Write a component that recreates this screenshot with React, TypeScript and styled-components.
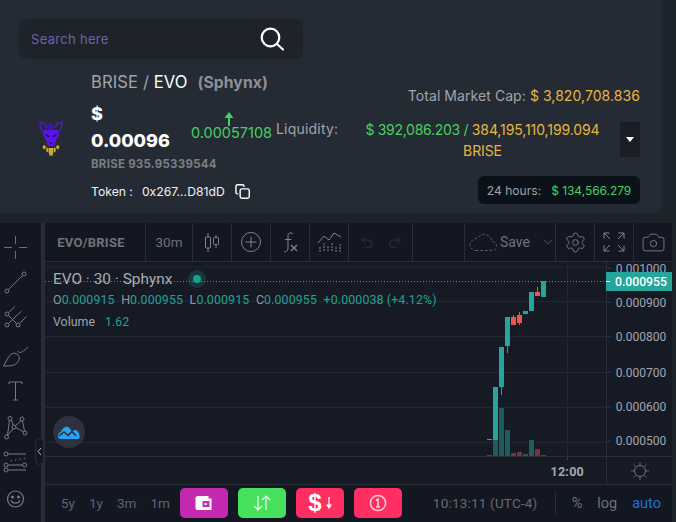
import React from "react";
import styled, { createGlobalStyle } from "styled-components";
import { Settings, Camera, Undo2, Redo2, ChevronDown } from "lucide-react";

const Global = createGlobalStyle`
  html, body { margin: 0; padding: 0; background: #1d232b; }
  body { width: 676px; height: 522px; overflow: hidden; }
  * { box-sizing: border-box; }
`;

const Page = styled.div`
  width: 676px;
  height: 522px;
  display: flex;
  flex-direction: column;
  background: #1d232b;
  font-family: Inter, "Noto Sans", sans-serif;
  overflow: hidden;
`;

const Card = styled.section`
  width: 662px;
  height: 213px;
  flex: none;
  padding: 19px 22px 0 19px;
  background: #252b34;
  border-radius: 0 0 7px 0;
`;

const SearchBox = styled.div`
  width: 284px;
  height: 40px;
  display: flex;
  align-items: center;
  justify-content: space-between;
  padding: 0 19px 0 12px;
  background: #1e232b;
  border-radius: 7px;
`;

const SearchText = styled.span`
  font-size: 13px;
  letter-spacing: 0.3px;
  color: #6b63a8;
`;

const InfoRow = styled.div`
  display: flex;
  height: 154px;
`;

const LeftBlock = styled.div`
  width: 257px;
  flex: none;
  display: flex;
`;

const LogoCol = styled.div`
  width: 72px;
  flex: none;
  padding: 62px 0 0 20px;
`;

const Details = styled.div`
  flex: 1;
  display: flex;
  flex-direction: column;
  white-space: nowrap;
`;

const Title = styled.div`
  height: 24px;
  margin-top: 11px;
  font-size: 16.6px;
  line-height: 24px;
  letter-spacing: 0.1px;
  color: #a0a4ab;
`;

const White = styled.span`
  color: #ffffff;
`;

const Pair = styled.b`
  margin-left: 5px;
  font-size: 15.7px;
  font-weight: 700;
  color: #8d9095;
`;

const PriceRow = styled.div`
  display: flex;
  height: 54px;
  margin-top: 6px;
`;

const Price = styled.div`
  width: 101px;
  flex: none;
  font-size: 18px;
  line-height: 27px;
  font-weight: 800;
  color: #ffffff;
`;

const Change = styled.div`
  display: flex;
  flex-direction: column;
  align-items: center;
  width: 79px;
  padding-top: 12px;
  font-size: 14.5px;
  line-height: 18px;
  color: #46d160;
`;

const ChangeArrow = styled.svg`
  flex: none;
  margin: 0 6px -2px 0;
`;

const BriseValue = styled.div`
  margin-top: 2px;
  font-size: 11.5px;
  line-height: 16px;
  font-weight: 700;
  letter-spacing: 0.25px;
  color: #7b7e83;
`;

const TokenRow = styled.div`
  display: flex;
  align-items: center;
  margin-top: 11px;
  height: 16px;
  font-size: 12.2px;
  color: #f1f2f3;
`;

const TokenAddress = styled.span`
  margin: 0 10px 0 9px;
`;

const RightBlock = styled.div`
  flex: 1;
  display: flex;
  flex-direction: column;
  align-items: flex-end;
  padding-top: 28px;
`;

const CapLine = styled.div`
  height: 18px;
  font-size: 14px;
  line-height: 18px;
  letter-spacing: 0.07px;
  color: #a0a4ab;
  white-space: nowrap;
`;

const Gold = styled.span`
  color: #e8b53e;
`;

const Green = styled.span`
  color: #46d160;
`;

const LiquidGreen = styled(Green)`
  letter-spacing: -0.3px;
`;

const LiquidGold = styled(Gold)`
  letter-spacing: -0.1px;
`;

const LiquidityRow = styled.div`
  align-self: stretch;
  display: flex;
  align-items: flex-start;
  margin-top: 17px;
`;

const LiquidityLabel = styled.span`
  width: 89px;
  flex: none;
  margin-top: -2px;
  font-size: 14px;
  line-height: 18px;
  letter-spacing: 0.2px;
  color: #a0a4ab;
`;

const LiquidityValue = styled.div`
  width: 235px;
  flex: none;
  margin-top: -3px;
  text-align: center;
  font-size: 14px;
  line-height: 21px;
  white-space: nowrap;
`;

const CaretButton = styled.div`
  width: 20px;
  height: 35px;
  flex: none;
  margin-left: auto;
  display: flex;
  align-items: center;
  justify-content: center;
  background: #1a1e26;
`;

const VolumePill = styled.div`
  width: 162px;
  height: 28px;
  margin-top: 15px;
  display: flex;
  align-items: center;
  justify-content: center;
  gap: 10px;
  font-size: 12px;
  letter-spacing: 0.05px;
  color: #a0a4ab;
  background: #0b1118;
  border-radius: 6px;
  white-space: nowrap;
`;

const PillGreen = styled(Green)`
  letter-spacing: -0.05px;
`;

const Widget = styled.section`
  position: relative;
  width: 672px;
  height: 299px;
  margin-top: 10px;
  flex: none;
  display: flex;
  background: #131722;
  font-family: Roboto, "Liberation Sans", sans-serif;
`;

const DrawingBar = styled.div`
  width: 45px;
  flex: none;
  padding-top: 6px;
  display: flex;
  flex-direction: column;
  border-right: 4px solid #282c37;
`;

const DrawingTool = styled.div<{ $active?: boolean }>`
  width: 30px;
  height: 36px;
  display: flex;
  align-items: center;
  justify-content: center;
  color: ${(p) => (p.$active ? "#2a7fdc" : "#777a84")};
`;

const Collapse = styled.div`
  position: absolute;
  left: 35px;
  top: 215px;
  width: 9px;
  height: 27px;
  display: flex;
  align-items: center;
  justify-content: center;
  background: #131722;
  border: 1px solid #2a2e39;
  border-radius: 5px;
`;

const Main = styled.div`
  flex: 1;
  min-width: 0;
  display: flex;
  flex-direction: column;
`;

const TopBar = styled.div`
  height: 39px;
  flex: none;
  display: flex;
  border-bottom: 1px solid #2a2e39;
`;

const TopItem = styled.div<{ $w: number; $noLine?: boolean; $shift?: number }>`
  width: ${(p) => p.$w}px;
  flex: none;
  display: flex;
  align-items: center;
  justify-content: center;
  padding-left: ${(p) => (p.$shift && p.$shift > 0 ? p.$shift : 0)}px;
  padding-right: ${(p) => (p.$shift && p.$shift < 0 ? -p.$shift : 0)}px;
  color: #80838d;
  font-size: 13px;
  border-right: ${(p) => (p.$noLine ? "none" : "1px solid #2a2e39")};
`;

const Symbol = styled.b`
  font-size: 13px;
  font-weight: 700;
  letter-spacing: 0.25px;
  color: #6f7379;
`;

const Interval = styled.span`
  font-size: 13.5px;
  color: #6f727b;
`;

const SaveLabel = styled.span`
  margin: 0 11px 0 2px;
  font-size: 14px;
  color: #6f727b;
`;

const ChartGrid = styled.div`
  position: relative;
  display: grid;
  grid-template-columns: 561px 66px;
  grid-template-rows: 194px 28px;
  background: #161a25;
  border-bottom: 1px solid #2a2e39;
`;

const Legend = styled.div`
  position: absolute;
  left: 8px;
  top: 7px;
  color: #b2b5be;
  white-space: nowrap;
`;

const LegendTitle = styled.div`
  height: 20px;
  display: flex;
  align-items: center;
  gap: 6px;
  font-size: 15.4px;
  color: #a9acb5;
`;

const Dot = styled.i`
  width: 18px;
  height: 18px;
  margin-left: 10px;
  display: flex;
  align-items: center;
  justify-content: center;
  border-radius: 50%;
  background: rgba(38, 166, 154, 0.2);
  &::after {
    content: "";
    width: 8px;
    height: 8px;
    border-radius: 50%;
    background: #0fa58f;
  }
`;

const Ohlc = styled.div`
  height: 20px;
  display: flex;
  gap: 6.5px;
  align-items: center;
  font-size: 12.4px;
  letter-spacing: 0.12px;
  color: #9598a1;
`;

const Teal = styled.span`
  color: #1fa294;
`;

const VolumeLine = styled.div`
  margin-top: 2px;
  height: 20px;
  display: flex;
  gap: 10px;
  align-items: center;
  font-size: 12.4px;
  color: #a0a3ac;
`;

const LogoBadge = styled.div`
  position: absolute;
  left: 8px;
  top: 154px;
  width: 32px;
  height: 32px;
  display: flex;
  align-items: center;
  justify-content: center;
  border-radius: 50%;
  background: #2e323e;
`;

const PriceTag = styled.div`
  position: absolute;
  left: 561px;
  top: 10px;
  width: 66px;
  height: 19px;
  display: flex;
  align-items: center;
  padding-left: 9px;
  font-size: 12.2px;
  font-weight: 500;
  color: #ffffff;
  background: #26a69a;
  &::before {
    content: "";
    position: absolute;
    left: 0;
    top: 9px;
    width: 4px;
    height: 1px;
    background: #ffffff;
  }
`;

const TimeAxis = styled.div`
  position: relative;
  border-top: 1px solid #2a2e39;
  display: flex;
  align-items: center;
  justify-content: flex-end;
  padding: 2px 22px 0 0;
  font-size: 12.5px;
  font-weight: 700;
  letter-spacing: 0.25px;
  color: #a5a8b0;
  &::after {
    content: "";
    position: absolute;
    left: 522px;
    top: 0;
    width: 1px;
    height: 3px;
    background: #363a45;
  }
`;

const AxisCorner = styled.div`
  display: flex;
  align-items: center;
  justify-content: center;
  color: #70737d;
  border-top: 1px solid #2a2e39;
  border-left: 1px solid #2a2e39;
`;

const BottomBar = styled.div`
  flex: 1;
  display: flex;
  align-items: center;
  padding: 0 11px 1px 16px;
  font-size: 13.5px;
  color: #5a6478;
  white-space: nowrap;
`;

const Ranges = styled.div`
  display: flex;
  gap: 14px;
  margin-right: 10px;
`;

const Actions = styled.div`
  display: flex;
  gap: 10px;
`;

const ActionButton = styled.div<{ $bg: string }>`
  width: 48px;
  height: 30px;
  display: flex;
  align-items: center;
  justify-content: center;
  gap: 4px;
  color: #ffffff;
  background: ${(p) => p.$bg};
  border-radius: 5px;
`;

const Dollar = styled.b`
  font-family: "Liberation Sans", sans-serif;
  font-size: 24px;
  line-height: 24px;
  font-weight: 700;
`;

const Clock = styled.span`
  margin: 0 17px 0 31px;
  font-size: 13.5px;
  letter-spacing: 0.2px;
  color: #666a75;
`;

const BarDivider = styled.span`
  width: 1px;
  height: 22px;
  margin-right: 17px;
  background: #2a2e39;
`;

const ScaleMode = styled.span<{ $active?: boolean }>`
  margin-right: 15px;
  font-size: 14.5px;
  color: ${(p) => (p.$active ? "#1f6fd6" : "#6f727c")};
  &:last-child {
    margin-right: 0;
  }
`;

type Candle = { x: number; top: number; bot: number; hi?: number; lo?: number; up: boolean; vol: number };

const candles: Candle[] = [
  { x: 487, top: 439, bot: 440, up: true, vol: 455 },
  { x: 493, top: 387, bot: 440, up: true, vol: 440 },
  { x: 499, top: 347, bot: 387, lo: 395, up: true, vol: 408 },
  { x: 505, top: 317, bot: 346, lo: 353, up: true, vol: 430 },
  { x: 511, top: 317, bot: 325, hi: 315, up: false, vol: 453 },
  { x: 517, top: 315, bot: 323, hi: 312, lo: 325, up: false, vol: 452 },
  { x: 523, top: 311, bot: 314, up: true, vol: 454 },
  { x: 529, top: 292, bot: 311, up: true, vol: 440 },
  { x: 535, top: 292, bot: 296, hi: 287, up: false, vol: 449 },
  { x: 541, top: 281, bot: 297, up: true, vol: 455 },
];

const grid = [267, 301.5, 336.5, 372.5, 407.5, 442.5];
const prices = ["0.001000", "0.000900", "0.000800", "0.000700", "0.000600", "0.000500"];

function ChartPane() {
  const ox = 45;
  const oy = 262;
  return (
    <svg width="561" height="194" viewBox={`${ox} ${oy} 561 194`} style={{ display: "block" }}>
      {grid.map((y) => (
        <line key={y} x1={ox} x2={606} y1={y} y2={y} stroke="#232732" />
      ))}
      <line x1="567.5" x2="567.5" y1={oy} y2="456" stroke="#232732" />
      {candles.map((c) => (
        <rect
          key={`v${c.x}`}
          x={c.x}
          y={c.vol}
          width="5"
          height={456 - c.vol}
          fill={c.up ? "#1d5d5c" : "#7c3338"}
        />
      ))}
      {candles.map((c) => {
        const col = c.up ? "#26a69a" : "#ef5350";
        return (
          <g key={c.x}>
            {c.hi !== undefined && <line x1={c.x + 2.5} x2={c.x + 2.5} y1={c.hi} y2={c.top} stroke={col} />}
            {c.lo !== undefined && <line x1={c.x + 2.5} x2={c.x + 2.5} y1={c.bot} y2={c.lo} stroke={col} />}
            <rect x={c.x} y={c.top} width="5" height={c.bot - c.top} fill={col} />
          </g>
        );
      })}
      <line x1={ox} x2={606} y1="281.5" y2="281.5" stroke="#26a69a" strokeDasharray="1 2" />
    </svg>
  );
}

function PriceAxis() {
  return (
    <svg width="66" height="194" viewBox="606 262 66 194" style={{ display: "block", borderLeft: "1px solid #2a2e39" }}>
      {grid.map((y, i) => (
        <g key={y}>
          <line x1="606" x2="610" y1={y} y2={y} stroke="#363a45" />
          <text x="615" y={y + 4.3} fontSize="12.2" fill="#a3a6af" fontFamily="Roboto, sans-serif">
            {prices[i]}
          </text>
        </g>
      ))}
    </svg>
  );
}

function SphynxLogo() {
  return (
    <svg width="24" height="35" viewBox="0 0 24 35">
      <path d="M5 12 L1.5 7 L1 1.5 L6 2.5 L8 7 M19 12 L22.5 7 L23 1.5 L18 2.5 L16 7" fill="none" stroke="#5b14ea" strokeWidth="1.1" />
      <path d="M9.5 10 L9 4 L11 1 L12 3 L13 1 L15 4 L14.5 10Z" fill="#3f14a0" />
      <path d="M5 9 H19 L20 14 L16.5 20 L15.5 25 H8.5 L7.5 20 L4 14Z" fill="#5b12f0" />
      <path d="M6.5 12.5 L10.5 15 L9.5 16.5 L7 15Z M17.5 12.5 L13.5 15 L14.5 16.5 L17 15Z" fill="#1e1440" />
      <path d="M10.5 21 H13.5 L13 23 H11Z" fill="#2c1670" />
      <path d="M3.5 25 L6 24 L7 27 L4.5 28.5Z M20.5 25 L18 24 L17 27 L19.5 28.5Z" fill="#d8ac33" />
      <path d="M7.5 26.5 L9.5 27 L9.5 32 L7 30Z M16.5 26.5 L14.5 27 L14.5 32 L17 30Z" fill="#cda232" />
      <path d="M10 27 H14 L13.6 34.5 H10.4Z" fill="#efc53f" />
      <path d="M11.7 27 h.6 v7.5 h-.6Z" fill="#7a6420" />
    </svg>
  );
}

const Tool = (p: React.SVGProps<SVGSVGElement>) => (
  <svg width="28" height="28" viewBox="0 0 28 28" fill="none" stroke="currentColor" strokeWidth="1" {...p} />
);

export default function App() {
  return (
    <Page>
      <Global />
      <Card>
        <SearchBox>
          <SearchText>Search here</SearchText>
          <svg width="24" height="24" viewBox="0 0 24 24" fill="none" stroke="#fff" strokeWidth="2.2">
            <circle cx="10.5" cy="10.5" r="8.8" />
            <path d="M17 17 L23 22.5" strokeLinecap="round" />
          </svg>
        </SearchBox>
        <InfoRow>
          <LeftBlock>
            <LogoCol>
              <SphynxLogo />
            </LogoCol>
            <Details>
              <Title>
                BRISE / <White>EVO</White> <Pair>(Sphynx)</Pair>
              </Title>
              <PriceRow>
                <Price>
                  $
                  <br />
                  0.00096
                </Price>
                <Change>
                  <ChangeArrow width="10" height="14" viewBox="0 0 10 14">
                    <path d="M5 0 L9.5 6 H6 V14 H4 V6 H.5Z" fill="#46d160" />
                  </ChangeArrow>
                  0.00057108
                </Change>
              </PriceRow>
              <BriseValue>BRISE 935.95339544</BriseValue>
              <TokenRow>
                Token :
                <TokenAddress>0x267...D81dD</TokenAddress>
                <svg width="15" height="15" viewBox="0 0 16 16" fill="none" stroke="#fff" strokeWidth="1.5">
                  <rect x="5.5" y="5.2" width="9.7" height="10" rx="1.8" />
                  <path d="M3.5 10.5 H2.6 A1.6 1.6 0 0 1 1 9 V2.4 A1.6 1.6 0 0 1 2.6 .8 H8 A1.6 1.6 0 0 1 9.6 2.4 V3.2" />
                </svg>
              </TokenRow>
            </Details>
          </LeftBlock>
          <RightBlock>
            <CapLine>
              Total Market Cap: <Gold>$ 3,820,708.836</Gold>
            </CapLine>
            <LiquidityRow>
              <LiquidityLabel>Liquidity:</LiquidityLabel>
              <LiquidityValue>
                <LiquidGreen>$ 392,086.203 / </LiquidGreen>
                <LiquidGold>
                  384,195,110,199.094
                  <br />
                  BRISE
                </LiquidGold>
              </LiquidityValue>
              <CaretButton>
                <svg width="8" height="5" viewBox="0 0 8 5">
                  <path d="M0 0 H8 L4 5Z" fill="#fff" />
                </svg>
              </CaretButton>
            </LiquidityRow>
            <VolumePill>
              24 hours: <PillGreen>$ 134,566.279</PillGreen>
            </VolumePill>
          </RightBlock>
        </InfoRow>
      </Card>
      <Widget>
        <DrawingBar>
          <DrawingTool $active>
            <Tool>
              <path d="M14.5 3 V11 M14.5 18 V26 M3 14.5 H11 M18 14.5 H26" />
            </Tool>
          </DrawingTool>
          <DrawingTool>
            <Tool>
              <circle cx="6" cy="22" r="2" />
              <circle cx="23" cy="5" r="2" />
              <path d="M7.5 20.5 L21.5 6.5" />
            </Tool>
          </DrawingTool>
          <DrawingTool>
            <Tool>
              <circle cx="6" cy="9" r="2" />
              <circle cx="6" cy="20" r="2" />
              <circle cx="17" cy="20" r="2" />
              <path d="M7.5 7.5 L14 1.5 M7.5 18.5 L20.5 6 M18.5 18.5 L25.5 11.5 M7.5 10.5 L15.5 18.5" />
            </Tool>
          </DrawingTool>
          <DrawingTool>
            <Tool>
              <path d="M2.5 25 L7 17 C9 13 13 11 16 13 C19 15 19 19 16 22 C13 25 8 25 2.5 25Z" />
              <path d="M17 10 C18 13 21 12 27 6" />
            </Tool>
          </DrawingTool>
          <DrawingTool>
            <Tool>
              <path d="M8 7 V5 H21 V7 M14.5 5 V23 M12 23 H17" />
            </Tool>
          </DrawingTool>
          <DrawingTool>
            <Tool>
              <circle cx="9" cy="5.5" r="2" />
              <circle cx="21" cy="6" r="2" />
              <circle cx="13" cy="14" r="2" />
              <circle cx="5.5" cy="24" r="2" />
              <circle cx="24" cy="20" r="2" />
              <path d="M8.5 7.5 L6.5 22 M10.5 7 L12 12 M20 8 L14.5 12.5 M21.5 8 L23.5 18 M15 14.5 L22.5 19 M12 16 L6.5 22.5" />
            </Tool>
          </DrawingTool>
          <DrawingTool>
            <Tool>
              <circle cx="5" cy="5" r="2" />
              <circle cx="5" cy="16" r="2" />
              <circle cx="5" cy="21" r="2" />
              <circle cx="23.5" cy="16" r="2" />
              <path d="M7 5 H25 M7 16 H21.5 M7 21 H25" />
              <path d="M9.5 12 L25.5 9" strokeDasharray="1.5 3" />
            </Tool>
          </DrawingTool>
          <DrawingTool>
            <Tool strokeWidth="1.2">
              <circle cx="14.5" cy="14" r="8" />
              <circle cx="11.5" cy="12" r=".9" fill="currentColor" />
              <circle cx="17.5" cy="12" r=".9" fill="currentColor" />
              <path d="M10 15.5 C11.5 19 17.5 19 19 15.5" />
            </Tool>
          </DrawingTool>
        </DrawingBar>
        <Collapse>
          <svg width="5" height="9" viewBox="0 0 5 9" fill="none" stroke="#b2b5be">
            <path d="M4 1 L1 4.5 L4 8" />
          </svg>
        </Collapse>
        <Main>
          <TopBar>
            <TopItem $w={101} $shift={-8}>
              <Symbol>EVO/BRISE</Symbol>
            </TopItem>
            <TopItem $w={47}>
              <Interval>30m</Interval>
            </TopItem>
            <TopItem $w={39}>
              <Tool>
                <path d="M10 5 V24 M18 7 V20" />
                <rect x="7.5" y="9" width="5" height="11" rx=".8" fill="#131722" />
                <rect x="15.5" y="9.5" width="5" height="7" rx=".8" fill="#131722" />
              </Tool>
            </TopItem>
            <TopItem $w={39}>
              <Tool>
                <circle cx="14" cy="14" r="9.5" />
                <path d="M14 8.5 V19.5 M8.5 14 H19.5" />
              </Tool>
            </TopItem>
            <TopItem $w={39}>
              <Tool>
                <path d="M17 6 C14 3.5 12 5.5 12 8 V20 C12 23 10 24.5 8 23.5 M9 11.5 H15.5" />
                <path d="M15 17 L21 23 M21 17 L15 23" strokeWidth="1.4" />
              </Tool>
            </TopItem>
            <TopItem $w={39}>
              <Tool>
                <path d="M3 15 L9 8 L14 12 L19 5 L26 9" />
                <path d="M5 19 V24 M9 15 V24 M13 18 V24 M17 15 V24 M21 19 V24 M25 16 V24" strokeDasharray="2 1" />
              </Tool>
            </TopItem>
            <TopItem $w={64}>
              <Undo2 size={16} strokeWidth={1} color="#3c404b" style={{ marginRight: 12 }} />
              <Redo2 size={16} strokeWidth={1} color="#3c404b" />
            </TopItem>
            <TopItem $w={52} />
            <TopItem $w={91} $shift={4}>
              <svg width="29" height="20" viewBox="0 0 29 20" fill="none" stroke="#5d606b" strokeDasharray="2.5 2">
                <path d="M7 18.5 H23 C29 18.5 29 10 23 9.5 C22 3 13 -1 9 6 C3 6 -2 13 3 17 C4 18 6 18.5 7 18.5Z" />
              </svg>
              <SaveLabel>Save</SaveLabel>
              <ChevronDown size={14} strokeWidth={1} color="#80838d" />
            </TopItem>
            <TopItem $w={39}>
              <Settings size={23} strokeWidth={0.9} />
            </TopItem>
            <TopItem $w={39}>
              <Tool>
                <path d="M4 5 H9.5 M4 5 V10.5 M4 5 L10 11 M24 5 H18.5 M24 5 V10.5 M24 5 L18 11 M4 23 H9.5 M4 23 V17.5 M4 23 L10 17 M24 23 H18.5 M24 23 V17.5 M24 23 L18 17" />
              </Tool>
            </TopItem>
            <TopItem $w={38} $noLine>
              <Camera size={25} strokeWidth={0.85} />
            </TopItem>
          </TopBar>
          <ChartGrid>
            <ChartPane />
            <PriceAxis />
            <TimeAxis>12:00</TimeAxis>
            <AxisCorner>
              <svg width="18" height="18" viewBox="0 0 18 18" fill="none" stroke="currentColor">
                <circle cx="9" cy="9" r="5.5" />
                <path d="M9 0 V3 M9 15 V18 M0 9 H3 M15 9 H18 M2.6 2.6 L4.6 4.6 M13.4 13.4 L15.4 15.4 M2.6 15.4 L4.6 13.4 M13.4 4.6 L15.4 2.6" strokeWidth=".9" />
              </svg>
            </AxisCorner>
            <Legend>
              <LegendTitle>
                EVO · 30 · Sphynx
                <Dot />
              </LegendTitle>
              <Ohlc>
                <span>O<Teal>0.000915</Teal></span>
                <span>H<Teal>0.000955</Teal></span>
                <span>L<Teal>0.000915</Teal></span>
                <span>C<Teal>0.000955</Teal></span>
                <Teal>+0.000038 (+4.12%)</Teal>
              </Ohlc>
              <VolumeLine>
                Volume <Teal>1.62</Teal>
              </VolumeLine>
            </Legend>
            <LogoBadge>
              <svg width="22" height="13" viewBox="0 0 22 13">
                <path
                  d="M0 10 C0 7 2 6 3 6 C4 3 7 0 10 1 C12 1.5 13 4 14 6 L16 4 C19 4 21 6 21 8 C22 10 22 13 20 13 H3 C1 13 0 12 0 10Z"
                  fill="#2aa1f2"
                />
                <path d="M1 10 L6 6 L10 9.5 L14 5.5 L18 10" fill="none" stroke="#2e323e" strokeWidth="1.6" />
              </svg>
            </LogoBadge>
            <PriceTag>0.000955</PriceTag>
          </ChartGrid>
          <BottomBar>
            <Ranges>
              <span>5y</span>
              <span>1y</span>
              <span>3m</span>
              <span>1m</span>
            </Ranges>
            <Actions>
              <ActionButton $bg="#c32ab0">
                <svg width="17" height="16" viewBox="0 0 16 16">
                  <path
                    fillRule="evenodd"
                    d="M0 3 C0 2 1 1 2 1 H13 V3.5 H16 V15 H2 C1 15 0 14 0 13Z M7 6 V12 H14 V6Z"
                    fill="#fff"
                  />
                  <rect x="9" y="8" width="2.2" height="2" fill="#fff" />
                </svg>
              </ActionButton>
              <ActionButton $bg="#46e05c">
                <svg width="18" height="16" viewBox="0 0 18 16" fill="none" stroke="#fff" strokeWidth="1.1">
                  <path d="M5 1 V15 M1 11 L5 15 L9 11 M13 15 V1 M9 5 L13 1 L17 5" />
                </svg>
              </ActionButton>
              <ActionButton $bg="#ff2f62">
                <Dollar>$</Dollar>
                <svg width="6" height="16" viewBox="0 0 8 16">
                  <path d="M3.2 0 H4.8 V10 H8 L4 16 L0 10 H3.2Z" fill="#fff" />
                </svg>
              </ActionButton>
              <ActionButton $bg="#ff2f62">
                <svg width="18" height="18" viewBox="0 0 18 18" fill="none" stroke="#ffc9d6" strokeWidth="1.5">
                  <circle cx="9" cy="9" r="7.6" />
                  <path d="M7 6.5 L9 5.2 V13 M7 13 H11" strokeWidth="1.7" />
                </svg>
              </ActionButton>
            </Actions>
            <Clock>10:13:11 (UTC-4)</Clock>
            <BarDivider />
            <ScaleMode>%</ScaleMode>
            <ScaleMode>log</ScaleMode>
            <ScaleMode $active>auto</ScaleMode>
          </BottomBar>
        </Main>
      </Widget>
    </Page>
  );
}
